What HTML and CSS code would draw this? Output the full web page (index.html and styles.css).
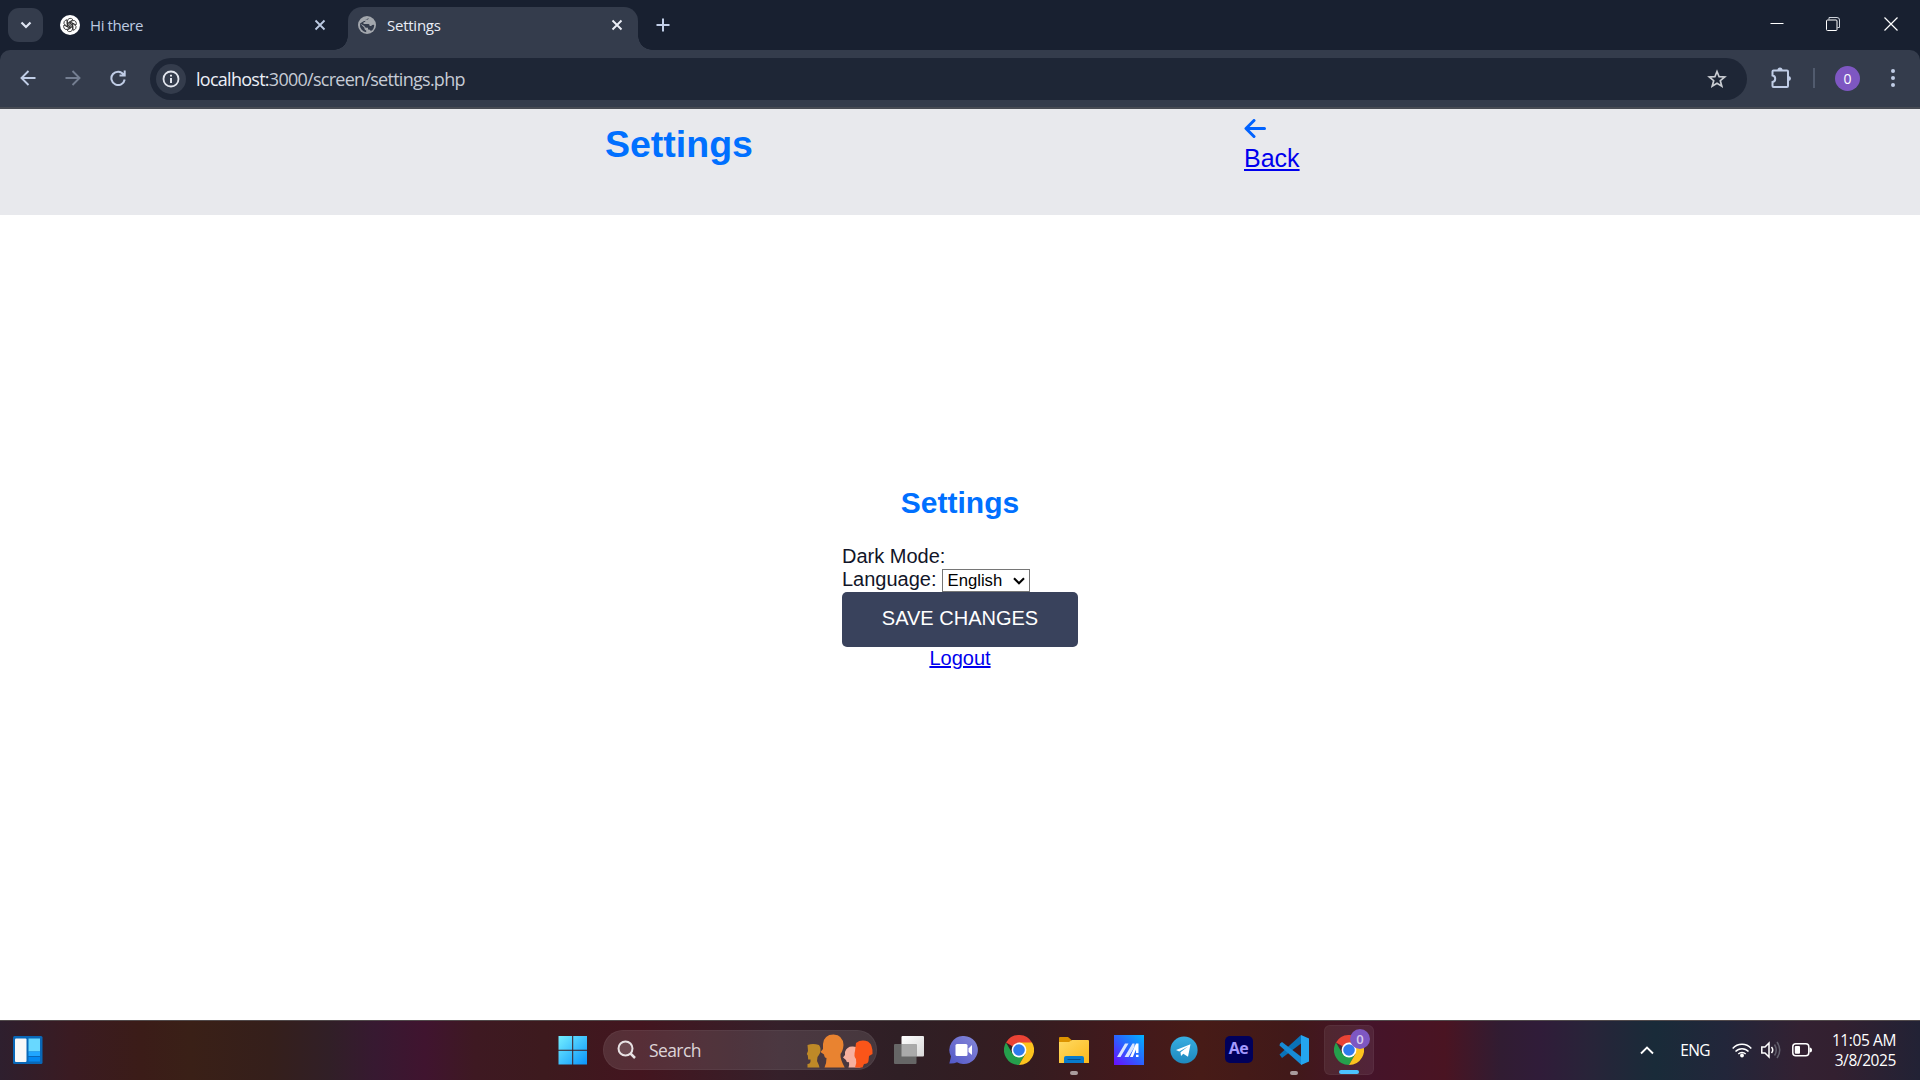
FILE: index.html
```
<!DOCTYPE html>
<html lang="en">
<head>
<meta charset="utf-8">
<title>Settings</title>
<link rel="stylesheet" href="styles.css">
</head>
<body>
<svg class="defs" width="0" height="0" aria-hidden="true">
  <defs>
    <linearGradient id="win" x1="0" y1="0" x2="1" y2="1"><stop offset="0" stop-color="#74efff"/><stop offset="1" stop-color="#0a94fb"/></linearGradient>
    <linearGradient id="folder" x1="0" y1="0" x2="1" y2="1"><stop offset="0" stop-color="#ffda63"/><stop offset="1" stop-color="#fbb91b"/></linearGradient>
    <linearGradient id="tele" x1="0" y1="0" x2="0" y2="1"><stop offset="0" stop-color="#37aee2"/><stop offset="1" stop-color="#1e88bd"/></linearGradient>
    <linearGradient id="chat" x1="0" y1="1" x2="1" y2="0"><stop offset="0" stop-color="#5058c8"/><stop offset=".5" stop-color="#6e6fd0"/><stop offset="1" stop-color="#8288d8"/></linearGradient>
    <linearGradient id="asus" x1="0" y1="1" x2="1" y2="0"><stop offset="0" stop-color="#6a0cff"/><stop offset=".5" stop-color="#2b62ff"/><stop offset="1" stop-color="#00b4ff"/></linearGradient>
    <linearGradient id="pane" x1="0" y1="0" x2="1" y2="1"><stop offset="0" stop-color="#fff"/><stop offset="1" stop-color="#d8d8d8"/></linearGradient>
    <symbol id="chrome" viewBox="0 0 30 30">
      <path d="M15 15 2 7.500A15 15 0 0 1 28 7.500Z" fill="#ea4335"/>
      <path d="M2 7.500 8.700 19 15 22 21.500 18.750 15 30A15 15 0 0 1 2 7.500Z" fill="#259f4c"/>
      <path d="M15 7.500H28A15 15 0 0 1 15 30L21.500 18.750 15 15Z" fill="#fcc31e"/>
      <circle cx="15" cy="15" r="7.400" fill="#fff"/><circle cx="15" cy="15" r="5.800" fill="#2f7bee"/>
    </symbol>
  </defs>
</svg>
<div class="screen">
  <div class="tabstrip">
    <div class="tab-search"><svg width="12" height="8" viewBox="0 0 12 8"><path d="M1.500 1.500 6 6 10.500 1.500" fill="none" stroke="#dfe5f2" stroke-width="2.200"/></svg></div>
    <div class="tab">
      <svg class="favicon" width="20" height="20" viewBox="0 0 20 20"><circle cx="10" cy="10" r="10" fill="#fff"/>
        <g fill="none" stroke="#222" stroke-width=".8"><path id="petal" d="M7.500 11.400V6Q7.700 3.500 10 3.300 12 3.300 13 4.800L8.900 7.200V10.500"/><use href="#petal" transform="rotate(60 10 10)"/><use href="#petal" transform="rotate(120 10 10)"/><use href="#petal" transform="rotate(180 10 10)"/><use href="#petal" transform="rotate(240 10 10)"/><use href="#petal" transform="rotate(300 10 10)"/></g></svg>
      <span class="tab-title">Hi there</span>
      <svg class="tab-close" width="12" height="12" viewBox="0 0 12 12"><path d="M1.500 1.500 10.500 10.500M10.500 1.500 1.500 10.500" stroke="#bccae2" stroke-width="1.800"/></svg>
    </div>
    <div class="tab tab-active">
      <svg class="favicon" width="18" height="18" viewBox="0 0 18 18"><circle cx="9" cy="9" r="9" fill="#a3a7ad"/><path d="M10.700 1.900Q10.600 3.600 9 3.700H7.300V5.500Q7.200 6.300 5.500 6.300V8.100H10.500Q11.700 8.200 11.700 9.900H13.200Q14 8.600 16.200 8.900 16.200 13.300 12.700 15.100 12.500 13.500 11 13.500H10V11.700H8.200Q6.800 11.500 6.400 10L2 7.600Q1.400 10.700 3.700 13.800 5.700 16 8.200 16.200V14.400Q6.500 14.300 6.400 12.600V11.700L2 7.600" fill="#343c4c"/></svg>
      <span class="tab-title">Settings</span>
      <svg class="tab-close" width="12" height="12" viewBox="0 0 12 12"><path d="M1.500 1.500 10.500 10.500M10.500 1.500 1.500 10.500" stroke="#eceff7" stroke-width="1.900"/></svg>
    </div>
    <svg class="new-tab" width="14" height="14" viewBox="0 0 14 14"><path d="M7 .5V13.500M.5 7H13.500" stroke="#c2cfe8" stroke-width="2"/></svg>
    <div class="window-buttons">
      <svg width="14" height="14" viewBox="0 0 14 14"><path d="M.5 6.500H13.500" stroke="#fff"/></svg>
      <svg width="14" height="14" viewBox="0 0 14 14"><path d="M3 2.500V.5H11Q13.500.500 13.500 3V10.500H11.500" fill="none" stroke="#cdd2da"/><rect x=".5" y="3" width="10.500" height="10.500" rx="1" fill="none" stroke="#fff"/></svg>
      <svg width="14" height="14" viewBox="0 0 14 14"><path d="M.5.500 13.500 13.500M13.500.500.500 13.500" stroke="#fff" stroke-width="1.200"/></svg>
    </div>
  </div>
  <div class="toolbar">
    <div class="nav"><svg width="16" height="16" viewBox="0 0 16 16"><path d="M15.500 8H2M8.500 1 1.500 8 8.500 15" fill="none" stroke="#c0cde6" stroke-width="1.900"/></svg></div>
    <div class="nav"><svg width="16" height="16" viewBox="0 0 16 16"><path d="M.5 8H14M7.500 1 14.500 8 7.500 15" fill="none" stroke="#747e91" stroke-width="1.900"/></svg></div>
    <div class="nav"><svg width="16" height="16" viewBox="0 0 16 16"><path d="M13.600 4.500A6.700 6.700 0 1 0 14.700 9.500M14.700.500V5.500H9.500" fill="none" stroke="#c0cde6" stroke-width="2"/></svg></div>
    <div class="address">
      <div class="site-info"><svg width="18" height="18" viewBox="0 0 18 18"><circle cx="9" cy="9" r="7.500" fill="none" stroke="#e2e5ed" stroke-width="1.800"/><path d="M9 8V13M9 4.700V6.500" stroke="#e2e5ed" stroke-width="2"/></svg></div>
      <span class="url"><b>localhost:</b>3000/screen/settings.php</span>
      <svg class="star" width="20" height="20" viewBox="0 0 20 20"><path d="M10 2.500 12.100 7.700 17.700 8 13.300 11.700 14.800 17.200 10 14.200 5.200 17.200 6.700 11.700 2.300 8 7.900 7.700Z" fill="none" stroke="#c9ccd2" stroke-width="1.700"/></svg>
    </div>
    <div class="extensions"><svg width="22" height="22" viewBox="0 0 22 22"><path d="M2.500 4.500Q2.500 3.500 3.500 3.500H17Q18 3.500 18 4.500V19Q18 20 17 20H3.500Q2.500 20 2.500 19V15Q5.200 14.500 5.200 11.700 5.200 9 2.500 8.500Z" fill="none" stroke="#c0cde6" stroke-width="2"/><path d="M7.500 3A2.500 2.500 0 0 1 12.500 3ZM18.500 9A2.500 2.500 0 0 1 18.500 14Z" fill="#c0cde6"/></svg></div>
    <div class="divider"></div>
    <div class="avatar">0</div>
    <svg class="menu" width="6" height="20" viewBox="0 0 6 20"><g fill="#c0cde6"><circle cx="3" cy="3" r="2"/><circle cx="3" cy="10" r="2"/><circle cx="3" cy="17" r="2"/></g></svg>
  </div>
  <div class="page">
    <header class="page-header">
      <h1>Settings</h1>
      <a class="back" href="#"><svg width="22" height="20" viewBox="0 0 22 20"><path d="M20.500 9.500H2.500M10 1.500 2 9.500 10 17.500" fill="none" stroke="#0062ff" stroke-width="3" stroke-linecap="round" stroke-linejoin="round"/></svg><span>Back</span></a>
    </header>
    <main class="page-main">
      <form class="settings">
        <h2>Settings</h2>
        <div class="field">Dark Mode:</div>
        <div class="field"><span class="label">Language:</span> <span class="select">English<svg width="12" height="8" viewBox="0 0 12 8"><path d="M1 1.300 6 6.300 11 1.300" fill="none" stroke="#000" stroke-width="2.100"/></svg></span></div>
        <button class="save" type="button">SAVE CHANGES</button>
        <a class="logout" href="#">Logout</a>
      </form>
    </main>
  </div>
  <div class="taskbar">
    <div class="widgets"><svg width="30" height="28" viewBox="0 0 30 28"><rect width="29.500" height="28" rx="1.500" fill="#0968b8"/><rect x="2" y="2.500" width="11.500" height="23.500" rx="1" fill="#f8f8f8"/><path d="M15.500 2.500H27V15.500H15.500Z" fill="#68d8ff"/><path d="M15.500 15.500H27V20H15.500Z" fill="#20a6ff"/><path d="M15.500 21H27V25.500H15.500Z" fill="#0488f0"/></svg></div>
    <div class="app"><svg width="30" height="30" viewBox="0 0 30 30"><path d="M.5 1H14.200V14.700H.5ZM15.200 1H29V14.700H15.200ZM.5 15.700H14.200V29.500H.5ZM15.200 15.700H29V29.500H15.200Z" fill="url(#win)"/></svg></div>
    <div class="search">
      <svg width="20" height="20" viewBox="0 0 20 20"><circle cx="8.500" cy="8.500" r="7" fill="#ffffff22" stroke="#e8e2e4" stroke-width="2"/><path d="M13.500 13.500 18 18" stroke="#e8e2e4" stroke-width="2.500"/></svg>
      <span>Search</span>
      <svg class="people" width="67" height="34" viewBox="0 0 67 34"><path d="M1.500 11Q7 9 13 11 15.500 14 14 19 13 21 11.500 23L11 27Q13 31 13.500 33.500H1.500V30Q5 30 4.500 25.500H2.200L1.800 21.500.800 20 2 17Z" fill="#be8927"/><path d="M17 10Q18 .500 27.500.500 37 1 37.500 11 37 17 34.500 20 34 25 38.700 33.500H18.500Q20.500 30 20.500 24 18.500 24 18 20.500L14.500 18 17 15Z" fill="#e98330"/><path d="M39 18Q41 12 47 12.500 54 13 54.500 19V33.500H42.500Q43.500 31 43 28 40.500 29 40 26L37 23.500 39 21Z" fill="#f6b09e"/><path d="M50 9Q55 5 62 7.500 67 11 66.500 20L63 22 62.500 27Q62 30 58 30L56.500 33.500H49Q51 29 50 25 47.500 22 49 17Z" fill="#fa5519"/></svg>
    </div>
    <div class="app"><svg width="30" height="28" viewBox="0 0 30 28"><rect x="7.500" width="22.500" height="20.500" rx="1" fill="url(#pane)"/><rect y="8" width="22.500" height="20" rx="1" fill="#666"/><path d="M7.500 8H22.500V20.500H7.500Z" fill="#aaa"/></svg></div>
    <div class="app"><svg width="30" height="28" viewBox="0 0 30 28"><path d="M15 0A14 14 0 1 1 8 26.200Q4.500 28 .300 27.500 1.500 23 2 20.500A14 14 0 0 1 15 0Z" fill="url(#chat)"/><rect x="6.500" y="8" width="12" height="12" rx="1.500" fill="#fff"/><path d="M19.500 12.500 23 9V19L19.500 16Z" fill="#fff"/></svg></div>
    <div class="app"><svg width="30" height="30"><use href="#chrome"/></svg></div>
    <div class="app"><svg width="30" height="26" viewBox="0 0 30 26"><path d="M0 1Q0 0 1 0H9L12.500 3V9H0Z" fill="#dc9300"/><path d="M0 5H10L13 3H29Q30 3 30 4V26H0Z" fill="url(#folder)"/><path d="M5 26V21Q5 19 7 19H23Q25 19 25 21V26Z" fill="#087bcc"/><path d="M8.500 22.500H21.500" stroke="#054f8d"/></svg><i class="running"></i></div>
    <div class="app"><svg width="30" height="30" viewBox="0 0 30 30"><path d="M0 0H30V30H0Z" fill="url(#asus)"/><path d="M3 22 11 8.500H14.500L6.500 22ZM10.500 22 18.500 8.500H20.500V12L14.500 22Z" fill="#d9e6ff"/><path d="M16 22 22 8.500H24.500V18H22V14.500L18.800 22ZM22 19.700H24.500V22H22Z" fill="#fff"/></svg></div>
    <div class="app"><svg width="28" height="28" viewBox="0 0 28 28"><circle cx="14" cy="14" r="13.600" fill="url(#tele)"/><path d="M6 14 20.500 8.200 18 20.800 13.300 17.700 11 20 10.500 16.200 18 10.500 9.200 15.500Z" fill="#fff"/></svg></div>
    <div class="app"><span class="ae">Ae</span></div>
    <div class="app"><svg width="30" height="30" viewBox="0 0 30 30"><path d="M.5 19.500 22 0V8.500L3 23Z" fill="#0a72b8"/><path d="M1 8.500 3 7 22.500 22V30L.500 10.500Z" fill="#178bd6"/><path d="M22 0 30 3.500V26.500L22 30V0Z" fill="#24a5ef"/></svg><i class="running"></i></div>
    <div class="app app-active"><svg width="30" height="30"><use href="#chrome"/></svg><span class="badge">0</span><i class="running"></i></div>
    <div class="tray">
      <svg width="14" height="9" viewBox="0 0 14 9"><path d="M1 7.500 7 1.500 13 7.500" fill="none" stroke="#fff" stroke-width="1.900"/></svg>
      <span class="lang">ENG</span>
      <svg class="wifi" width="20" height="16" viewBox="0 0 20 16"><g fill="none" stroke="#fff" stroke-width="1.500"><path d="M.7 6.500A12.500 12.500 0 0 1 19.300 6.500M3.500 9.500A8.800 8.800 0 0 1 16.500 9.500M6.300 12A5.300 5.300 0 0 1 13.700 12"/></g><circle cx="10" cy="13.500" r="1.900" fill="#fff"/></svg>
      <svg class="sound" width="20" height="18" viewBox="0 0 20 18"><path d="M.8 6H4L8 2V16L4 12H.8Z" fill="none" stroke="#fff" stroke-width="1.500"/><path d="M10.500 6Q13 9 10.500 12" fill="none" stroke="#fff" stroke-width="1.500"/><path d="M13.500 3.500Q17 9 13.500 14.500M16 1Q21.500 9 16 17" fill="none" stroke="#62606d" stroke-width="1.500"/></svg>
      <svg class="battery" width="21" height="14" viewBox="0 0 21 14"><rect x=".8" y=".8" width="16" height="12" rx="3" fill="none" stroke="#fff" stroke-width="1.500"/><rect x="2.800" y="3" width="5.200" height="7.700" rx="1" fill="#fff"/><path d="M17.500 4.500Q20 4.500 20 7T17.500 9.500Z" fill="#fff"/></svg>
      <div class="clock"><span>11:05 AM</span><span class="date">3/8/2025</span></div>
    </div>
  </div>
</div>
</body>
</html>
```
FILE: styles.css
```
* { box-sizing: border-box; }
body { margin: 0; background: #fff; font-family: "Liberation Sans", Arial, sans-serif; overflow: hidden; }
svg { display: block; flex: none; }
.defs { position: absolute; }
.screen { width: 1920px; height: 1080px; display: flex; flex-direction: column; background: #182030; }

/* Browser chrome */
.tabstrip, .toolbar, .taskbar { font-family: "Open Sans", "Noto Sans", sans-serif; }
.tabstrip { height: 50px; flex: none; display: flex; align-items: center; padding-left: 8px; }
.tab-search { width: 35px; height: 34px; border-radius: 11px; background: #343c4c; display: grid; place-items: center; }
.tab { width: 305px; height: 43px; margin-top: 7px; padding: 0 22px 7px 17px; display: flex; align-items: center; }
.tab-title { font-size: 15px; letter-spacing: -.4px; color: #bdcae1; margin-left: 10px; }
.tab-close { margin-left: auto; }
.tab-active { position: relative; width: 290px; padding: 0 15px 7px 10px; border-radius: 14px 14px 0 0; background: #343c4c; }
.tab-active::before, .tab-active::after { content: ""; position: absolute; bottom: 0; width: 14px; height: 14px; }
.tab-active::before { left: -14px; background: radial-gradient(circle at 0 0, transparent 13.500px, #343c4c 14px); }
.tab-active::after { right: -14px; background: radial-gradient(circle at 100% 0, transparent 13.500px, #343c4c 14px); }
.tab-active .tab-title { color: #e9edf6; margin-left: 11px; letter-spacing: -.25px; }
.new-tab { margin-left: 18px; }
.window-buttons { margin-left: auto; display: flex; gap: 42px; padding: 0 22px 2px 0; }
.window-buttons svg:last-child { margin-left: 2px; }
.toolbar { height: 59px; flex: none; display: flex; align-items: center; padding: 0 0 1px 5px; background: #343c4c; border-radius: 10px 10px 0 0; border-bottom: 2px solid #474b54; }
.nav { width: 45px; display: grid; place-items: center; }
.address { width: 1597px; height: 42px; margin: 1px 0 0 10px; padding: 0 20px 0 6px; border-radius: 21px; background: #1e2636; display: flex; align-items: center; }
.site-info { width: 30px; height: 30px; border-radius: 50%; background: #343c4c; display: grid; place-items: center; }
.url { margin-left: 10px; font-size: 18px; letter-spacing: -.73px; color: #c6cbd5; white-space: nowrap; }
.url b { font-weight: 400; color: #eceff6; }
.star { margin-left: auto; }
.extensions { width: 66px; padding-left: 23px; }
.divider { width: 2px; height: 20px; background: #515b6e; }
.avatar { width: 25px; height: 25px; margin-left: 20px; border-radius: 50%; background: #7e57c2; color: #fff; font-size: 14px; line-height: 25px; text-align: center; }
.menu { margin-left: 30px; }

/* Web page */
.page { flex: 1; min-height: 0; background: #fff; display: flex; flex-direction: column; }
.page-header { height: 106px; flex: none; background: #e8e9ed; display: grid; grid-template-columns: 605px 639px auto; align-items: start; }
.page-header h1 { grid-column: 2; margin: 14px 0 0; font-size: 37.500px; line-height: 43px; color: #0070ff; }
.back { color: #0000ee; font-size: 25px; line-height: 29px; padding-top: 10px; }
.back span { display: block; margin-top: 5px; }
.page-main { flex: 1; display: grid; justify-content: center; align-items: start; }
.settings { width: 236px; padding-top: 270px; display: flex; flex-direction: column; font-size: 20px; line-height: 23px; color: #111528; }
.settings h2 { margin: 0 0 25px; font-size: 30px; line-height: 35px; text-align: center; color: #0070ff; }
.field { height: 23px; display: flex; align-items: center; gap: 5px; }
.field + .field { height: 24px; align-items: flex-end; }
.label { padding-bottom: 1px; }
.select { width: 88px; height: 23px; padding: 0 4px 0 5px; border: 1px solid #767676; background: #fff; color: #000; font-size: 16.670px; line-height: 21px; display: flex; align-items: center; justify-content: space-between; }
.save { height: 55px; padding: 0 0 2px; border: 0; border-radius: 5px; background: #39425c; color: #fff; font: 20px/23px "Liberation Sans", Arial, sans-serif; }
.logout { color: #0000ee; align-self: center; }

/* Taskbar */
.taskbar { height: 60px; flex: none; display: flex; align-items: center; padding-bottom: 1px; color: #fff; border-top: 1px solid #514a4b;
  background: linear-gradient(90deg, #2e1f2e 0, #3a1b22 70px, #3b1c18 140px, #3a2017 190px, #351f1b 270px, #311f27 330px, #371931 375px, #40142f 425px, #3e1922 475px, #3d1a1e 545px, #43151f 640px, #35202a 780px, #2f1f25 900px, #351c20 1030px, #42191c 1120px, #471b17 1200px, #411919 1290px, #45142a 1370px, #4a1422 1445px, #311c32 1500px, #301c39 1540px, #282439 1590px, #192b39 1655px, #22263a 1725px, #332132 1800px, #332030 1835px, #222235 1920px); }
.widgets { width: 545px; padding-left: 13px; }
.app { position: relative; width: 55px; height: 50px; display: grid; place-items: center; }
.search { width: 274px; height: 40px; margin: 0 4px 0 3px; padding: 0 3px 0 13px; border-radius: 20px; background: #ffffff1c; border: 1px solid #ffffff0c; display: flex; align-items: center; font-size: 17.500px; letter-spacing: -.6px; color: #ddd4d7; }
.search span { margin-left: 12px; }
.people { margin-left: auto; margin-top: 2px; }
.running { position: absolute; left: 23.500px; bottom: 0; width: 8px; height: 4px; border-radius: 2px; background: #aa9c9d; }
.app-active { width: 50px; margin-left: 3px; border-radius: 6px; background: #ffffff12; border: 1px solid #ffffff0b; }
.app-active .running { left: 14px; bottom: 0; width: 20px; background: #4cc2ff; }
.badge { position: absolute; left: 25px; top: 3px; width: 20px; height: 20px; border-radius: 50%; background: #7e57c2; color: #d7cbed; font-size: 13px; font-weight: 600; line-height: 20px; text-align: center; }
.ae { width: 28px; height: 27px; margin-bottom: 2px; border-radius: 5px; background: #00005b; color: #a49aff; font-size: 16px; font-weight: 700; line-height: 25px; text-align: center; letter-spacing: -.5px; }
.tray { margin-left: auto; padding-right: 24px; display: flex; align-items: center; }
.lang { margin-left: 26px; font-size: 15.500px; letter-spacing: -.6px; }
.wifi { margin-left: 22px; }
.sound { margin-left: 9px; }
.battery { margin-left: 11px; }
.clock { width: 83px; display: flex; flex-direction: column; padding-bottom: 1px; text-align: right; font-size: 15.500px; line-height: 20px; letter-spacing: -.4px; white-space: nowrap; }
```
